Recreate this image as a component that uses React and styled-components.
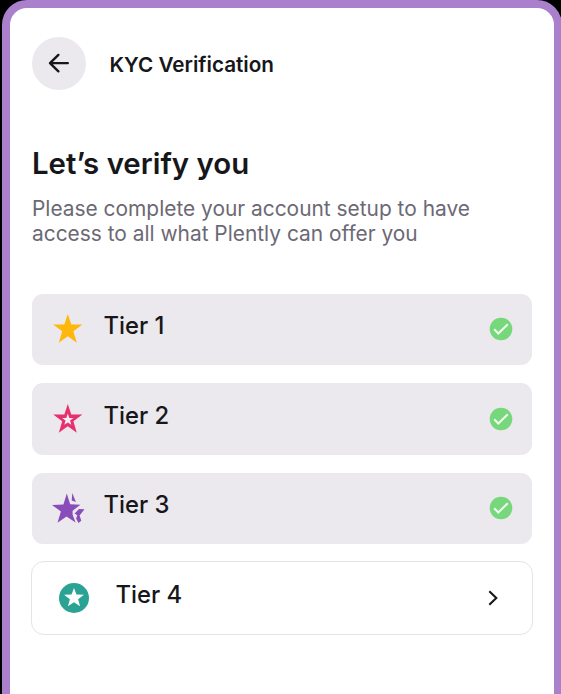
import React from "react";
import styled, { createGlobalStyle } from "styled-components";

const GlobalStyle = createGlobalStyle`
*{box-sizing:border-box;}
body{
margin:0;
background:#000;
overflow:hidden;
font-family:Inter, "Liberation Sans", sans-serif;
color:#17171b;
}
`

const Phone = styled.main`
width:560px;
height:720px;
margin-left:2px;
padding:28.6px 21px 0 22px;
border:8px solid #aa7fcb;
border-radius:25px;
background:#fff;
`

const Header = styled.header`
display:flex;
align-items:center;
gap:24px;
`

const BackButton = styled.button`
display:flex;
align-items:center;
justify-content:center;
width:54px;
height:53.6px;
padding:0;
border:0;
border-radius:50%;
background:#ebe9ed;
color:#17171b;
`

const PageName = styled.div`
margin:3.2px 0 0 -0.5px;
font-weight:600;
font-size:20.7px;
line-height:26px;
`

const Title = styled.h1`
margin:55.1px 0 0;
font-weight:600;
font-size:29.4px;
line-height:38px;
`

const Intro = styled.p`
margin:12.9px 0 0;
font-size:20.9px;
line-height:25.3px;
color:#6c6974;
white-space:nowrap;
`

const Tiers = styled.div`
display:flex;
flex-direction:column;
gap:18.2px;
margin-top:46.8px;
`

const TierCard = styled.div`
display:flex;
align-items:center;
width:500px;
height:71.4px;
padding:0 19px 0 18.5px;
border-radius:11px;
background:#ebe9ed;
`

const OpenTierCard = styled(TierCard)`
width:502px;
height:74px;
margin:-1.5px 0 0 -1px;
padding:0 29.5px 0 24.5px;
border:1px solid #e4e4e6;
border-radius:13px;
background:#fff;
`

const TierName = styled.div`
flex:1;
margin:0 0 6.3px ${(props)=>props.$indent || 19}px;
font-weight:500;
font-size:23.8px;
line-height:30px;
`

const Icon = styled.svg`
display:block;
flex:none;
`

const starPoints = "16.8,2 20.3,12.6 31.4,12.6 22.4,19.2 25.8,30.7 16.8,24.3 7.8,30.7 11.2,19.2 2.2,12.6 13.3,12.6"

const FullStar = () => (
    <Icon width="34" height="34" viewBox="0 0 34 34">
        <polygon points={starPoints} fill="#ffb70b"/>
    </Icon>
)

const HollowStar = () => (
    <Icon width="34" height="34" viewBox="0 0 34 34">
        <polygon points={starPoints} fill="#e7316d"/>
        <polygon points="16.8,11.5 18.3,15.9 22.5,16 19.1,18.6 20.3,22.8 16.8,20.4 13.3,22.8 14.5,18.6 11.1,16 15.3,15.9" fill="#f4edf1"/>
    </Icon>
)

const BrokenStar = () => (
    <Icon width="34" height="34" viewBox="0 0 34 34">
        <g fill="#894db9">
            <polygon points="15.8,2.5 19.2,13.2 29.4,13.8 21.6,19.8 21.6,23.8 24.6,31.5 15.5,25.6 6.5,31.8 9.9,20.5 1,13.9 12.4,13.6"/>
            <polygon points="21.3,1.9 24.9,11 20.7,9.4"/>
            <polygon points="33.5,18.2 28,18 23.6,22.6 26.3,24.3 25.1,27.5 27.5,31.9 30.3,29.8 28.6,24.4"/>
        </g>
    </Icon>
)

const RoundStar = () => (
    <Icon width="34" height="34" viewBox="0 0 34 34">
        <circle cx="17" cy="17" r="15" fill="#2aa394"/>
        <polygon points="17,6.9 19.5,13.4 26.9,13.7 21.1,18.2 23.1,25.3 17,21.3 10.9,25.3 12.9,18.2 7.1,13.7 14.5,13.4" fill="#fff"/>
    </Icon>
)

const Check = () => (
    <Icon width="24" height="24" viewBox="0 0 24 24">
        <circle cx="12" cy="12" r="11.3" fill="#77d77b"/>
        <path d="M5.2 12.2 9.3 16.4 18.8 7.2" fill="none" stroke="#eefaef" strokeWidth="2.1"/>
    </Icon>
)

const doneTiers = [
    { name: "Tier 1", Star: FullStar },
    { name: "Tier 2", Star: HollowStar },
    { name: "Tier 3", Star: BrokenStar },
]

const App = () => {
    return(
        <>
            <GlobalStyle/>
            <Phone>
                <Header>
                    <BackButton aria-label="Back">
                        <Icon width="24" height="24" viewBox="0 0 24 24" fill="none" stroke="currentColor" strokeWidth="2.4" strokeLinecap="round" strokeLinejoin="round">
                            <path d="M20.8 12.1H3.5M11.4 3.9 3 12.1l8.4 8.2"/>
                        </Icon>
                    </BackButton>
                    <PageName>KYC Verification</PageName>
                </Header>
                <Title>Let’s verify you</Title>
                <Intro>
                    Please complete your account setup to have<br/>
                    access to all what Plently can offer you
                </Intro>
                <Tiers>
                    {doneTiers.map(({ name, Star }) => (
                        <TierCard key={name}>
                            <Star/>
                            <TierName>{name}</TierName>
                            <Check/>
                        </TierCard>
                    ))}
                    <OpenTierCard>
                        <RoundStar/>
                        <TierName $indent={25}>Tier 4</TierName>
                        <Icon width="20" height="20" viewBox="0 0 20 20" fill="none" stroke="#17171b" strokeWidth="2.1">
                            <path d="M6.3 3.3 13.3 10 6.3 16.7"/>
                        </Icon>
                    </OpenTierCard>
                </Tiers>
            </Phone>
        </>
    )
}

export default App
